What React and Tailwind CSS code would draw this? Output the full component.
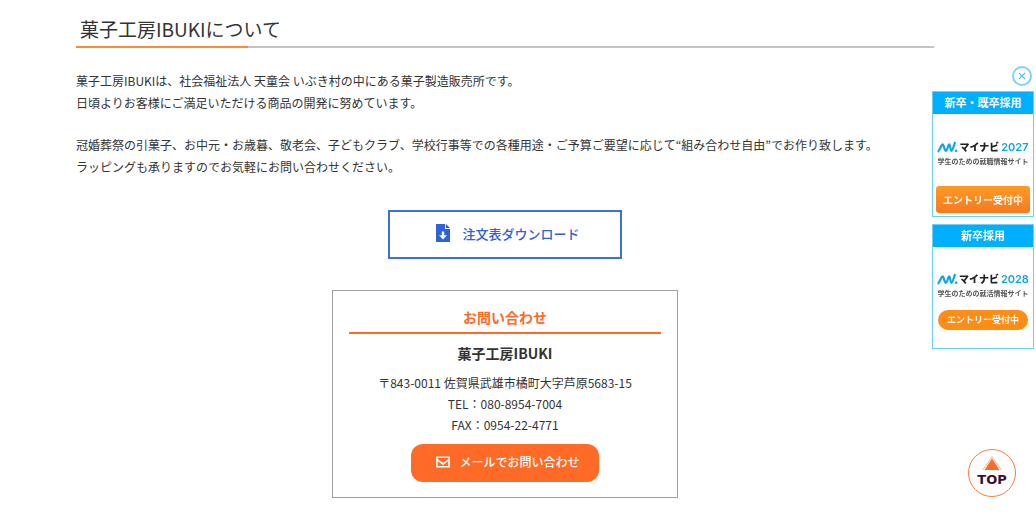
import React from 'react';

const banners = [
  {
    title: '新卒・既卒採用',
    year: '2027',
    caption: '学生のための就職情報サイト',
    bodyClass: 'h-[102px] pt-[27px] pb-[3px]',
    buttonClass: 'h-[27px] w-[94px] rounded-[3px] bg-linear-to-b from-[#ff9a24] to-[#f47a20] text-[10px]',
  },
  {
    title: '新卒採用',
    year: '2028',
    caption: '学生のための就活情報サイト',
    bodyClass: 'h-[101px] pt-[26px] pb-[18px]',
    buttonClass: 'h-5 w-[90px] rounded-full bg-[#ff8c14] text-[9px]',
  },
];

function MynaviMark() {
  return (
    <svg viewBox="0 0 22 12" className="h-3 w-[22px] shrink-0" fill="none" stroke="#10a5e8" strokeWidth="2.2" aria-hidden="true">
      <path d="M0.6 10.6C2.6 10.2 4.2 3.4 5.6 3.4C7 3.4 7.4 9.8 8.8 9.8C10.4 9.8 11 3.4 12.2 3.4C13.4 3.4 13.2 9.8 14.4 9.8C15.6 9.8 16.6 5 18.2 1" />
      <circle cx="19.2" cy="9.8" r="1.3" fill="#10a5e8" stroke="none" />
    </svg>
  );
}

function DownloadIcon() {
  return (
    <svg viewBox="0 0 14 18" className="mb-0.5 h-[18px] w-[14px]" fill="currentColor" aria-hidden="true">
      <path d="M0 0H9V5H14V18H0Z M5.8 7.6V11.2H3L7 15.6L11 11.2H8.2V7.6Z" fillRule="evenodd" />
      <path d="M10 0L14 4H10Z" />
    </svg>
  );
}

function MailIcon() {
  return (
    <svg viewBox="0 0 14 12" className="h-3 w-[14px]" fill="none" stroke="currentColor" strokeWidth="1.6" aria-hidden="true">
      <path d="M0.9 1.3H13.1V10.7H0.9Z" />
      <path d="M1 3.6L7 8L13 3.6" />
    </svg>
  );
}

function Banner({ title, year, caption, bodyClass, buttonClass }) {
  return (
    <a href="#" className="block w-[102px] border border-[#6cd0f7] bg-white text-center font-bold whitespace-nowrap">
      <div className="h-[22px] bg-[#00b0ff] text-[11px] leading-[21px] text-white">{title}</div>
      <div className={`flex flex-col items-center justify-between ${bodyClass}`}>
        <div className="flex flex-col items-center">
          <div className="flex h-3 items-center">
            <MynaviMark />
            <span className="text-[10px] leading-3 font-black text-[#222]">マイナビ</span>
            <span className="ml-0.5 font-[Inter,sans-serif] text-[11px] leading-3 font-semibold text-[#10a5e8]">{year}</span>
          </div>
          <p className="mt-0.5 text-[7px] leading-3 text-[#555]">{caption}</p>
        </div>
        <span className={`flex items-center justify-center text-white ${buttonClass}`}>エントリー受付中</span>
      </div>
    </a>
  );
}

export default function App() {
  return (
    <div className="bg-white pt-[13px] pr-[102px] pb-5 pl-[76px] font-['Noto_Sans_CJK_JP',sans-serif] text-[12px] text-[#333]">
      <main className="flex flex-col">
        <h2 className="pl-1 text-[19px] leading-8 font-normal">菓子工房IBUKIについて</h2>
        <div className="mt-px h-0.5 bg-[#c4c4c4]">
          <div className="h-full w-1/5 bg-[#ff8a33]" />
        </div>

        <div className="mt-[22px] flex flex-col gap-5 leading-[22px]">
          <p>
            菓子工房IBUKIは、社会福祉法人 天童会 いぶき村の中にある菓子製造販売所です。
            <br />
            日頃よりお客様にご満足いただける商品の開発に努めています。
          </p>
          <p>
            冠婚葬祭の引菓子、お中元・お歳暮、敬老会、子どもクラブ、学校行事等での各種用途・ご予算ご要望に応じて“組み合わせ自由”でお作り致します。
            <br />
            ラッピングも承りますのでお気軽にお問い合わせください。
          </p>
        </div>

        <a
          href="#"
          className="mt-8 flex h-[49px] w-[234px] items-center justify-center gap-3 self-center border-2 border-[#3b70dd] pb-0.5 pl-1.5 text-[13px] font-medium text-[#2d62d8]"
        >
          <DownloadIcon />
          注文表ダウンロード
        </a>

        {/* Contact card */}
        <section className="mt-[31px] flex w-[346px] flex-col items-center self-center border border-[#a0a0a0] px-4 pt-[15px] pb-[15px]">
          <h3 className="h-7 w-full border-b-2 border-[#ff6a26] text-center text-[14px] leading-[22px] font-bold text-[#ff6a26]">
            お問い合わせ
          </h3>
          <p className="mt-2 text-[14px] leading-[22px] font-bold">菓子工房IBUKI</p>
          <address className="mt-2 text-center leading-[21px] not-italic">
            〒843-0011 佐賀県武雄市橘町大字芦原5683-15
            <br />
            TEL：080-8954-7004
            <br />
            FAX：0954-22-4771
          </address>
          <a
            href="#"
            className="mt-[9px] flex h-[38px] w-[188px] items-center justify-center gap-[9px] rounded-xl bg-[#ff6a26] pb-0.5 pl-1.5 text-[12px] font-medium text-white"
          >
            <MailIcon />
            メールでお問い合わせ
          </a>
        </section>
      </main>

      <aside className="fixed top-[66px] right-0.5 flex flex-col items-end">
        <button type="button" aria-label="閉じる" className="mr-0.5 mb-[5px] flex size-5 items-center justify-center rounded-full border-2 border-[#7ed4f6] bg-white">
          <svg viewBox="0 0 8 8" className="size-2" stroke="#4cc3f2" strokeWidth="1.2" aria-hidden="true">
            <path d="M1 1L7 7M7 1L1 7" />
          </svg>
        </button>
        <div className="flex flex-col gap-[7px]">
          {banners.map((banner) => (
            <Banner key={banner.year} {...banner} />
          ))}
        </div>
      </aside>

      <a
        href="#"
        className="fixed right-5 bottom-5 flex size-12 flex-col items-center rounded-full border border-[#ff7a3c] bg-white pt-1.5 font-['DejaVu_Sans',sans-serif] text-[13px] leading-[18px] font-bold text-[#3a1030]"
      >
        <svg viewBox="0 0 20 15" className="h-[15px] w-5" aria-hidden="true">
          <path d="M10 2.5L17.5 14H2.5Z" fill="#ff6a26" />
          <path d="M0.8 14L10 0.8L19.2 14" fill="none" stroke="#ff9a6c" strokeWidth="0.8" />
        </svg>
        TOP
      </a>
    </div>
  );
}
